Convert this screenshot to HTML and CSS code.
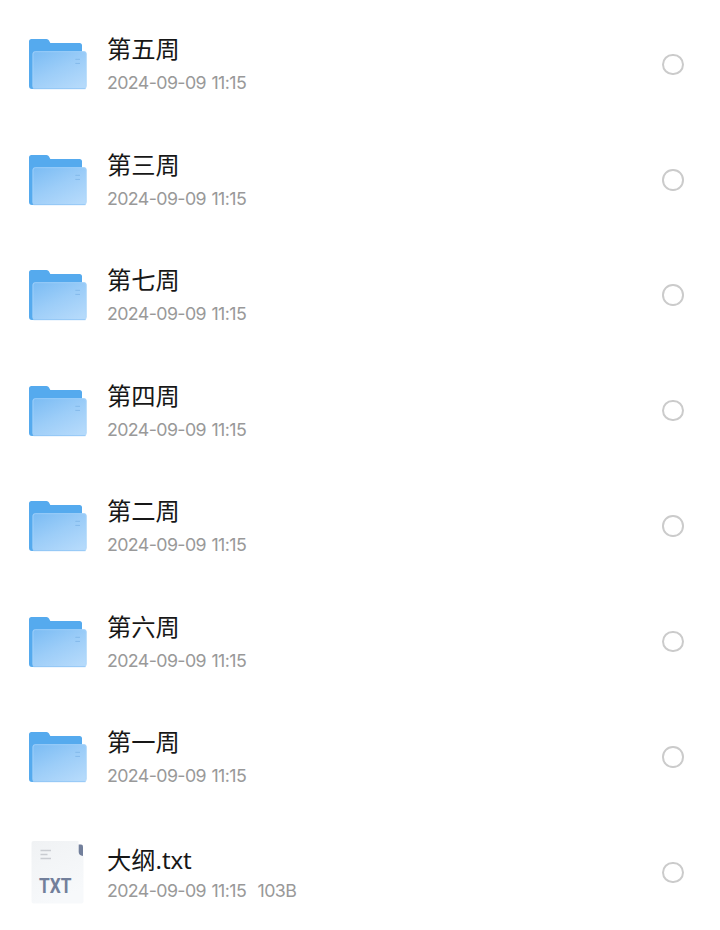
FILE: index.html
```
<!DOCTYPE html>
<html lang="zh-CN">
<head>
<meta charset="utf-8">
<title>文件</title>
<link rel="stylesheet" href="styles.css">
</head>
<body>
<svg class="defs" aria-hidden="true">
  <defs>
    <linearGradient id="front" x1="0.1" y1="0" x2="0.8" y2="1"><stop offset="0" stop-color="#7dbdf4"/><stop offset="0.5" stop-color="#9ccdf8"/><stop offset="1" stop-color="#b5dafb"/></linearGradient>
    <linearGradient id="paper" x1="0" y1="0" x2=".4" y2="1"><stop offset="0" stop-color="#f0f2f4"/><stop offset="1" stop-color="#f7f9fb"/></linearGradient>
    <symbol id="folder" viewBox="0 0 60 64">
      <path d="M1 9.500a2.500 2.500 0 0 1 2.500-2.500H18.500Q20.300 7 21 8.500L22.300 11H51.500A2.500 2.500 0 0 1 54 13.500V50a2 2 0 0 1-2 2l-48 5a3 3 0 0 1-3-3z" fill="#55aaee"/>
      <rect x="4.500" y="19.300" width="54" height="37.800" rx="2.500" fill="url(#front)"/>
      <path d="M5 54.500V22q0-2.300 2.300-2.300H56q2.200 0 2.200 2.300v32.500" fill="none" stroke="#a8d4fa" stroke-width=".7"/>
      <path d="M5.500 56.700H57.500" stroke="#8ac2f4" stroke-width=".8"/>
      <path d="M47.300 27.300H52M47.300 31.400H52" stroke="#83b9ea" stroke-width="1"/>
    </symbol>
  </defs>
</svg>
<main class="list">
  <div class="row"><svg class="icon"><use href="#folder"/></svg><div class="info"><div class="name">第五周</div><div class="meta"><span>2024-09-09</span><span>11:15</span></div></div><i class="check"></i></div>
  <div class="row"><svg class="icon"><use href="#folder"/></svg><div class="info"><div class="name">第三周</div><div class="meta"><span>2024-09-09</span><span>11:15</span></div></div><i class="check"></i></div>
  <div class="row"><svg class="icon"><use href="#folder"/></svg><div class="info"><div class="name">第七周</div><div class="meta"><span>2024-09-09</span><span>11:15</span></div></div><i class="check"></i></div>
  <div class="row"><svg class="icon"><use href="#folder"/></svg><div class="info"><div class="name">第四周</div><div class="meta"><span>2024-09-09</span><span>11:15</span></div></div><i class="check"></i></div>
  <div class="row"><svg class="icon"><use href="#folder"/></svg><div class="info"><div class="name">第二周</div><div class="meta"><span>2024-09-09</span><span>11:15</span></div></div><i class="check"></i></div>
  <div class="row"><svg class="icon"><use href="#folder"/></svg><div class="info"><div class="name">第六周</div><div class="meta"><span>2024-09-09</span><span>11:15</span></div></div><i class="check"></i></div>
  <div class="row"><svg class="icon"><use href="#folder"/></svg><div class="info"><div class="name">第一周</div><div class="meta"><span>2024-09-09</span><span>11:15</span></div></div><i class="check"></i></div>
  <div class="row">
    <svg class="icon" viewBox="0 0 60 64">
      <path d="M5.500 1H50.500V5.500Q51 14 55.500 16V61.500a2 2 0 0 1-2 2H5.500a2 2 0 0 1-2-2V3a2 2 0 0 1 2-2z" fill="url(#paper)"/>
      <path d="M50.700 4.500H53Q55 4.500 55 6.500V16Q50.700 15.500 50.700 12z" fill="#727f9b"/>
      <path d="M12.500 10.500H23M12.500 14.500H19.500M12.500 18.500H23" stroke="#c9ccd1" stroke-width="1.500"/>
      <text class="badge" x="11" y="53.200" textLength="32.500" lengthAdjust="spacingAndGlyphs">TXT</text>
    </svg>
    <div class="info file"><div class="name">大纲<span class="ext">.txt</span></div><div class="meta"><span>2024-09-09</span><span>11:15</span><span class="size">103B</span></div></div><i class="check"></i>
  </div>
</main>
</body>
</html>
```
FILE: styles.css
```
body {
  margin: 0;
  background: #fff;
}
.defs {
  display: block;
  width: 0;
  height: 0;
}
.list {
  padding-top: 6.6px;
}
.row {
  display: flex;
  align-items: center;
  box-sizing: border-box;
  height: 115.45px;
  padding: 0 36.5px 0 28px;
}
.icon {
  flex: none;
  width: 60px;
  height: 64px;
}
.info {
  flex: 1;
  margin-left: 19px;
}
.name {
  height: 36px;
  line-height: 34px;
  font-family: "Noto Sans CJK SC", sans-serif;
  font-size: 24.3px;
  color: #171717;
}
.file {
  padding-top: 2px;
}
.file .name {
  height: 33px;
}
.ext {
  font-family: "Noto Sans", sans-serif;
  font-size: 24px;
  letter-spacing: -0.1px;
}
.meta {
  display: flex;
  gap: 5.5px;
  height: 30px;
  line-height: 32px;
  font-family: Inter, sans-serif;
  font-size: 17.8px;
  font-weight: 400;
  letter-spacing: -0.6px;
  color: #999;
}
.size {
  margin-left: 6px;
}
.check {
  box-sizing: border-box;
  width: 21.5px;
  height: 21.5px;
  border: 2px solid #cbcbcb;
  border-radius: 50%;
}
.badge {
  font-family: Roboto, sans-serif;
  font-size: 20.5px;
  font-weight: 700;
  fill: #727f9b;
}
```
